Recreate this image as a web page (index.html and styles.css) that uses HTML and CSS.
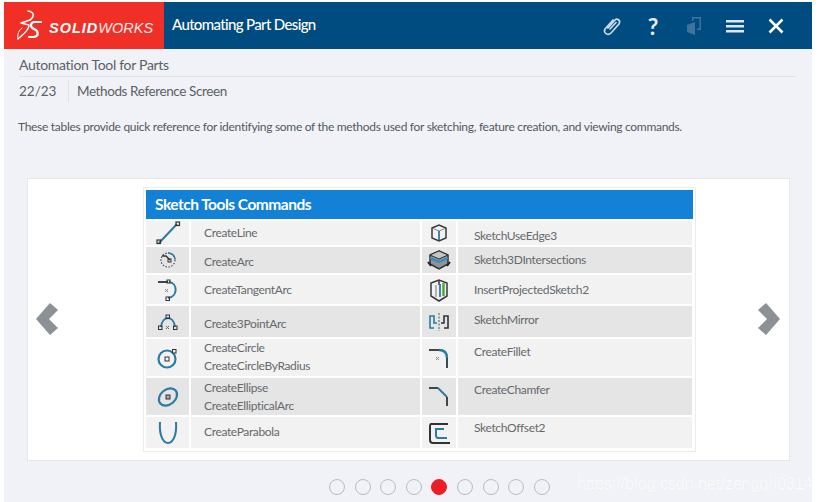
FILE: index.html
```html
<!DOCTYPE html>
<html lang="en">
<head>
<meta charset="utf-8">
<title>Automating Part Design</title>
<link rel="stylesheet" href="styles.css">
</head>
<body>
<div class="app">
  <header class="topbar">
    <div class="brand">
      <svg class="ds" width="26" height="36" viewBox="0 0 26 36" fill="none" stroke="#fff" stroke-linecap="round">
        <path d="M12 2 C18 3 19 7 14 11" stroke-width="1.6"/>
        <path d="M14 11 L5 14 M2 30 C6 26 13 22 13 16 L5 14" stroke-width="1.4"/>
        <path d="M2 30 C1 25 3 21 6 19" stroke-width="1"/>
        <path d="M25 13 L18 13 C14 14 14 18 18 20 C23 22 23 27 18 28 L13 28" stroke-width="2.2"/>
      </svg>
      <span class="wordmark"><b>SOLID</b><i>WORKS</i></span>
    </div>
    <div class="course">Automating Part Design</div>
    <nav class="tools">
      <svg width="24" height="24" viewBox="0 0 24 24" fill="none" stroke="#c9d9e6" stroke-width="1.7" stroke-linecap="round"><path d="M8 14 L15 6 C17 4 21 6 19 10 L11 19 C8 22 3 19 5 15 L13 6 M10 15 L16 8.500"/></svg>
      <span class="help">?</span>
      <svg width="24" height="24" viewBox="0 0 24 24"><path d="M10 3 H19 V16 H15 V14.500 H17.500 V4.500 H11.500 V7 H10Z" fill="#3f7499"/><path d="M5 11 L13 8 V21 L5 18Z" fill="#3f7499"/></svg>
      <svg width="24" height="24" viewBox="0 0 24 24" fill="#dde6ee"><rect x="3" y="6" width="18" height="2.500"/><rect x="3" y="11" width="18" height="2.500"/><rect x="3" y="16" width="18" height="2.500"/></svg>
      <svg width="24" height="24" viewBox="0 0 24 24" stroke="#fff" stroke-width="2.600"><path d="M5.500 5.500 L18.500 18.500 M18.500 5.500 L5.500 18.500"/></svg>
    </nav>
  </header>

  <section class="intro">
    <h1 class="module">Automation Tool for Parts</h1>
    <div class="crumb"><span class="count">22/23</span><span class="screen">Methods Reference Screen</span></div>
    <p class="lead">These tables provide quick reference for identifying some of the methods used for sketching, feature creation, and viewing commands.</p>
  </section>

  <section class="card">
    <svg class="chev" width="23" height="32" viewBox="0 0 23 32"><path d="M14 0 L22 7 L13 16 L22 25 L14 32 L0 16Z" fill="#8d9096"/></svg>
    <div class="sheet">
      <div class="sheet-title">Sketch Tools Commands</div>
      <div class="grid">
        <div class="ic"><svg width="28" height="24" viewBox="0 0 28 24" fill="none"><path d="M5 22 L23 3" stroke="#2b7ba3" stroke-width="2"/><rect x="3" y="19" width="3.500" height="3.500" stroke="#333" stroke-width="1.200"/><rect x="22" y="1" width="3.500" height="3.500" stroke="#333" stroke-width="1.200"/></svg></div>
        <div class="nm pt3">CreateLine</div>
        <div class="ic"><svg width="20" height="20" viewBox="0 0 20 20" fill="none"><path d="M3 5 L10 2 L17 5 V15 L10 18 L3 15Z" stroke="#3a3a3a" stroke-width="1.500"/><path d="M4 5.500 L10 8 L16 5.500" stroke="#888"/><path d="M10 8 V17" stroke="#2b7ba3" stroke-width="1.800"/></svg></div>
        <div class="nm r pt6">SketchUseEdge3</div>

        <div class="ic dk"><svg width="22" height="20" viewBox="0 0 22 20" fill="none"><circle cx="11" cy="10" r="7" stroke="#444" stroke-width="1.100" stroke-dasharray="1.500 1.500"/><path d="M5 6 H9 L13 10" stroke="#333" stroke-width="1.400"/><path d="M11 3 C15 3 18 6 18 9" stroke="#2b7ba3" stroke-width="1.500"/><rect x="11" y="9" width="3" height="3" stroke="#333"/></svg></div>
        <div class="nm dk pt6">CreateArc</div>
        <div class="ic dk"><svg width="24" height="22" viewBox="0 0 24 22" fill="none"><path d="M12 2 L21 6 V15 L12 20 L3 15 V6Z" fill="#8f9296" stroke="#2f3133" stroke-width="1.500"/><path d="M3 9 L12 13 L21 9" stroke="#2f8fc0" stroke-width="2"/><path d="M12 2 L21 6 L12 10 L3 6Z" fill="#c3c6c8" stroke="#333"/><path d="M1 13 L4 17 M23 13 L20 17" stroke="#222" stroke-width="2"/></svg></div>
        <div class="nm dk r pt4">Sketch3DIntersections</div>

        <div class="ic"><svg width="24" height="26" viewBox="0 0 24 26" fill="none"><path d="M2 5 H12" stroke="#333" stroke-width="1.800"/><path d="M13 5 C22 6 22 20 12 21" stroke="#2b7ba3" stroke-width="2"/><rect x="11" y="3" width="3" height="3" stroke="#333"/><rect x="10" y="20" width="3.500" height="3.500" stroke="#333"/><path d="M9 12 L12 15 M12 12 L9 15" stroke="#888"/></svg></div>
        <div class="nm pt6">CreateTangentArc</div>
        <div class="ic"><svg width="22" height="26" viewBox="0 0 22 26" fill="none"><path d="M3 6 L11 3 L19 6 V19 L11 24 L3 19Z M11 3 V8" stroke="#3a3a3a" stroke-width="1.500"/><path d="M8 8 V20" stroke="#888" stroke-width="1.200"/><path d="M12 7 V20" stroke="#2b7ba3" stroke-width="1.800"/><path d="M15.500 6 V19" stroke="#4ba52f" stroke-width="2.400"/></svg></div>
        <div class="nm r pt6">InsertProjectedSketch2</div>

        <div class="ic dk"><svg width="24" height="22" viewBox="0 0 24 22" fill="none"><path d="M5 16 C6 4 18 4 19 16" stroke="#2b7ba3" stroke-width="1.800"/><rect x="2.500" y="15" width="3.500" height="3.500" stroke="#333"/><rect x="10" y="4" width="3.500" height="3.500" stroke="#333"/><rect x="17.500" y="15" width="3.500" height="3.500" stroke="#333"/><path d="M10 15 L13 18 M13 15 L10 18" stroke="#666"/></svg></div>
        <div class="nm dk pt9">Create3PointArc</div>
        <div class="ic dk"><svg width="24" height="22" viewBox="0 0 24 22" fill="none"><path d="M12 2 V20" stroke="#555" stroke-dasharray="2 1.500"/><path d="M10 12 H7 V5 H3 V17 H7" stroke="#2b7ba3" stroke-width="1.600"/><path d="M14 12 H17 V5 H21 V17 H17" stroke="#333" stroke-width="1.600"/></svg></div>
        <div class="nm dk r pt5">SketchMirror</div>

        <div class="ic"><svg width="24" height="24" viewBox="0 0 24 24" fill="none"><circle cx="11" cy="13" r="8.500" stroke="#2b7ba3" stroke-width="2.200"/><rect x="9" y="11" width="4" height="4" stroke="#333"/><rect x="16.500" y="3.500" width="3.500" height="3.500" fill="#eee" stroke="#333"/></svg></div>
        <div class="nm">CreateCircle<br>CreateCircleByRadius</div>
        <div class="ic"><svg width="24" height="24" viewBox="0 0 24 24" fill="none"><path d="M2 4 H13" stroke="#333" stroke-width="1.800"/><path d="M12 4 C17 4 20 7 20 12" stroke="#2b7ba3" stroke-width="2.400"/><path d="M20 12 V22" stroke="#333" stroke-width="1.800"/><path d="M9 11 L12 14 M12 11 L9 14" stroke="#888"/></svg></div>
        <div class="nm r pt4">CreateFillet</div>

        <div class="ic dk"><svg width="24" height="24" viewBox="0 0 24 24" fill="none"><ellipse cx="12" cy="12" rx="10" ry="7.500" transform="rotate(-40 12 12)" stroke="#2b7ba3" stroke-width="2.200"/><rect x="10" y="10" width="4" height="4" fill="#aaa" stroke="#333"/></svg></div>
        <div class="nm dk pt1">CreateEllipse<br>CreateEllipticalArc</div>
        <div class="ic dk"><svg width="24" height="24" viewBox="0 0 24 24" fill="none"><path d="M2 3 H11" stroke="#333" stroke-width="1.800"/><path d="M11 3 L20 12" stroke="#2b7ba3" stroke-width="2"/><path d="M20 12 V21" stroke="#333" stroke-width="1.800"/></svg></div>
        <div class="nm dk r pt3">CreateChamfer</div>

        <div class="ic"><svg width="24" height="24" viewBox="0 0 24 24" fill="none"><path d="M4 1 C3 14 7 22 12 22 C17 22 21 14 20 1" stroke="#2b7ba3" stroke-width="2"/></svg></div>
        <div class="nm pt6">CreateParabola</div>
        <div class="ic"><svg width="24" height="24" viewBox="0 0 24 24" fill="none"><path d="M21 3 H4 C3 3 3 4 3 6 V19 C3 21 4 22 6 22 H23" stroke="#333" stroke-width="2"/><path d="M17 8 H9 V14 C9 16 10 17 11 17 H20" stroke="#2b7ba3" stroke-width="2"/></svg></div>
        <div class="nm r pt2">SketchOffset2</div>
      </div>
    </div>
    <svg class="chev right" width="23" height="32" viewBox="0 0 23 32"><path d="M9 0 L1 7 L10 16 L1 25 L9 32 L23 16Z" fill="#8d9096"/></svg>
  </section>

  <div class="dots">
    <span class="dot"></span><span class="dot"></span><span class="dot"></span><span class="dot"></span>
    <span class="dot on"></span>
    <span class="dot"></span><span class="dot"></span><span class="dot"></span><span class="dot"></span>
  </div>
  <div class="mark">https://blog.csdn.net/zengqh0314</div>
</div>
</body>
</html>
```

FILE: styles.css
```css
* { box-sizing: border-box; }
html, body { margin: 0; padding: 0; height: 100%; background: #fff; overflow: hidden; }
body { font-family: Lato, Roboto, "Liberation Sans", sans-serif; color: #5c5f63; }

.app {
  position: relative;
  width: 808px;
  height: 500px;
  margin: 2px 0 0 4px;
  background: #f0f2f7;
  display: flex;
  flex-direction: column;
}

.topbar { height: 47px; display: flex; align-items: stretch; background: #004b80; flex: none; }
.brand { width: 160px; background: #f03026; display: flex; align-items: center; padding-left: 12px; color: #fff; flex: none; }
.ds { margin-right: 7px; margin-top: 2px; flex: none; }
.wordmark { font-family: "Liberation Sans", sans-serif; font-size: 14.500px; white-space: nowrap; margin-top: 5px; }
.wordmark b { font-weight: 700; font-style: italic; letter-spacing: 1px; }
.wordmark i { font-weight: 400; opacity: .9; }
.course { margin-left: 8px; line-height: 45px; color: #fff; font-size: 15px; font-weight: 500; letter-spacing: -0.65px; white-space: nowrap; }
.tools { margin-left: auto; display: flex; align-items: center; gap: 17px; padding-right: 24px; }
.help { width: 24px; text-align: center; color: #e6edf3; font-size: 23px; font-weight: 700; }

.intro { padding: 0 16px 0 15px; flex: none; }
.module { margin: 0; height: 28px; padding-top: 6px; line-height: 20px; font-size: 14px; font-weight: 400; letter-spacing: -0.3px; border-bottom: 1px solid #dfe1e4; }
.crumb { display: flex; align-items: center; height: 26px; margin-top: 1px; font-size: 13.500px; }
.count { width: 50px; height: 22px; line-height: 22px; border-right: 1px solid #dfe1e4; }
.screen { margin-left: 8px; letter-spacing: -0.4px; }
.lead { margin: 13px 0 0 -1px; font-size: 12px; line-height: 20px; letter-spacing: -0.3px; white-space: nowrap; color: #55585c; }

.card {
  margin: 41px 22px 0 23px;
  height: 283px;
  background: #fff;
  border: 1px solid #e6e6e2;
  display: flex;
  align-items: center;
  padding: 0 9px 0 8px;
  flex: none;
}
.chev { flex: none; margin-top: -2px; }
.chev.right { margin-left: auto; }

.sheet { margin: 0 0 0 84px; width: 553px; height: 265px; border: 1px solid #ececec; padding: 2px; }
.sheet-title { height: 29px; background: #1281d6; color: #fff; font-size: 15.500px; font-weight: 700; line-height: 29px; letter-spacing: -0.5px; padding-left: 9px; }
.grid {
  margin-top: 2px;
  display: grid;
  grid-template-columns: 43px 229px 34px 234px;
  grid-template-rows: 24px 26px 29px 31px 37px 37px 31px;
  gap: 2px;
}
.ic { background: #f2f2f2; display: flex; align-items: center; justify-content: center; }
.nm { background: #f2f2f2; padding-left: 13px; font-size: 12px; line-height: 18px; letter-spacing: -0.35px; color: #66696d; }
.nm.r { padding-left: 16px; }
.dk { background: #e5e5e5; }
.pt1 { padding-top: 1px; }
.pt2 { padding-top: 2px; }
.pt3 { padding-top: 3px; }
.pt4 { padding-top: 4px; }
.pt5 { padding-top: 5px; }
.pt6 { padding-top: 6px; }
.pt9 { padding-top: 9px; }

.dots { margin-top: 18px; margin-left: 325px; display: flex; gap: 9.600px; flex: none; }
.dot { width: 16px; height: 16px; border-radius: 50%; border: 1.500px solid #bcbcbc; }
.dot.on { background: #ee1c25; border-color: #ee1c25; }

.mark {
  position: absolute;
  left: 573px;
  top: 473px;
  font-family: "Liberation Sans", sans-serif;
  font-size: 16px;
  line-height: 18px;
  color: #fafafc;
  text-shadow: 0 0 1px rgba(0, 0, 0, .05);
  white-space: nowrap;
}
```
